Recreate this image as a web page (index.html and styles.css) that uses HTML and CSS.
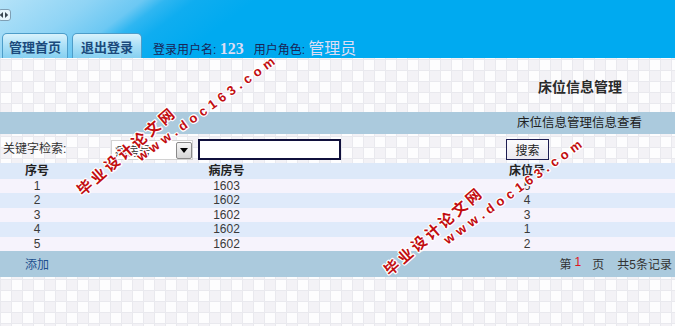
FILE: index.html
```html
<!DOCTYPE html>
<html lang="zh-CN">
<head>
<meta charset="utf-8">
<title>床位信息管理</title>
<link rel="stylesheet" href="styles.css">
</head>
<body>
<div class="header">
  <div class="hdr-top">
    <svg class="toggle" width="13" height="12" viewBox="0 0 13 12">
      <rect x="0.5" y="0.5" width="12" height="11" rx="2.5" fill="#e6f4fb" stroke="#7f9fb4"/>
      <path d="M5 3 L1.8 6 L5 9 Z" fill="#3a4650"/>
      <path d="M7 3 L10.2 6 L7 9 Z" fill="#3a4650"/>
    </svg>
  </div>
  <div class="nav">
    <a class="tab tab-home">管理首页</a>
    <a class="tab tab-out">退出登录</a>
    <span class="info">登录用户名: <b class="uval">123</b></span>
    <span class="info role">用户角色: <span class="rval">管理员</span></span>
  </div>
</div>

<div class="main">
  <div class="title-row"><h1 class="title">床位信息管理</h1></div>
  <div class="bar sub">床位信息管理信息查看</div>
  <div class="search">
    <span class="label">关键字检索:</span>
    <div class="sel">
      <span class="sel-text">病房号</span>
      <span class="sel-btn">
        <svg width="8" height="5" viewBox="0 0 8 5"><path d="M0 0 H8 L4 5 Z" fill="#000"/></svg>
      </span>
    </div>
    <input class="kw" type="text" value="">
    <button class="btn" type="button">搜索</button>
  </div>

  <div class="grid">
    <div class="row head"><div>序号</div><div>病房号</div><div>床位号</div></div>
    <div class="row odd"><div>1</div><div>1603</div><div>5</div></div>
    <div class="row even"><div>2</div><div>1602</div><div>4</div></div>
    <div class="row odd"><div>3</div><div>1602</div><div>3</div></div>
    <div class="row even"><div>4</div><div>1602</div><div>1</div></div>
    <div class="row odd"><div>5</div><div>1602</div><div>2</div></div>
  </div>

  <div class="bar foot">
    <a class="add">添加</a>
    <div class="pager">
      <span class="p1">第</span><span class="pnum">1</span><span class="p2">页</span><span>共5条记录</span>
    </div>
  </div>
</div>

<div class="wm wm-cn wm-cn1">毕业设计论文网</div>
<div class="wm wm-en wm-en1">www.doc163.com</div>
<div class="wm wm-cn wm-cn2">毕业设计论文网</div>
<div class="wm wm-en wm-en2">www.doc163.com</div>
</body>
</html>
```

FILE: styles.css
```css
html, body {
  margin: 0;
  padding: 0;
}

body {
  position: relative;
  min-height: 326px;
  overflow: hidden;
  font-family: "Liberation Sans", "Noto Sans CJK SC", sans-serif;
  font-size: 12px;
  color: #333;
  background-color: #fdfdfe;
  background-image:
    linear-gradient(to right, #e9e9ee 1px, transparent 1px),
    linear-gradient(to bottom, #e9e9ee 1px, transparent 1px),
    conic-gradient(#f3f2f6 25%, transparent 0 50%, #f3f2f6 0 75%, transparent 0);
  background-size: 11px 11px, 11px 11px, 22px 22px;
  background-position: 0 4px, 0 4px, 0 4px;
}

/* ---------- header ---------- */
.header {
  height: 58px;
  background:
    linear-gradient(143deg, #b4e2f8 0%, #8fd4f5 12%, #6cc8f3 19%, #2fb6f1 22%, #0fadf0 26%, #00aaf0 34%, #00aaf0 100%);
  display: flex;
  flex-direction: column;
}

.hdr-top {
  height: 33px;
  padding-top: 9px;
  box-sizing: border-box;
}

.toggle {
  display: block;
  margin-left: -2px;
}

.nav {
  height: 25px;
  display: flex;
  align-items: flex-start;
}

.tab {
  display: block;
  height: 25px;
  box-sizing: border-box;
  padding-top: 3px;
  line-height: 21px;
  text-align: center;
  font-size: 13px;
  font-weight: bold;
  color: #1b4a7c;
  border: 1px solid #4d9dc9;
  border-bottom: none;
  border-radius: 5px 5px 0 0;
  background: linear-gradient(#d9f2fc, #aee1f7 45%, #86d0f1);
}

.tab-home {
  width: 66px;
  margin-left: 2px;
}

.tab-out {
  width: 70px;
  margin-left: 4px;
}

.info {
  padding-top: 5px;
  line-height: 21px;
  color: #1a2456;
  font-size: 12px;
  margin-left: 11px;
  white-space: nowrap;
}

.info.role {
  margin-left: 10px;
}

.uval {
  font-family: "Liberation Serif", serif;
  font-size: 16px;
  font-weight: bold;
  color: #dcdcf4;
}

.rval {
  font-size: 16px;
  color: #dcdcf4;
}

/* ---------- main ---------- */
.title-row {
  height: 54px;
  box-sizing: border-box;
  padding-top: 21px;
  display: flex;
  justify-content: flex-end;
  padding-right: 53px;
}

.title {
  margin: 0;
  font-size: 14px;
  line-height: 16px;
  font-weight: bold;
  color: #2a2a2a;
}

.bar {
  background: #abcadd;
}

.sub {
  height: 22px;
  line-height: 22px;
  text-align: right;
  padding-right: 33px;
  font-size: 12.5px;
  color: #222;
}

.search {
  height: 29px;
  box-sizing: border-box;
  padding-top: 5px;
  display: flex;
  align-items: flex-start;
}

.label {
  width: 108px;
  padding-left: 3px;
  line-height: 21px;
  color: #333;
}

.sel {
  width: 82px;
  height: 20px;
  margin-top: 1px;
  box-sizing: border-box;
  border: 1px solid #d2d2d2;
  background: #fff;
  display: flex;
  align-items: center;
  justify-content: space-between;
}

.sel-text {
  padding-left: 3px;
  color: #333;
}

.sel-btn {
  width: 16px;
  height: 17px;
  box-sizing: border-box;
  border: 1px solid #8a8a8a;
  border-radius: 2px;
  background: linear-gradient(#f6f6f6, #d6d6d6);
  display: flex;
  align-items: center;
  justify-content: center;
}

.kw {
  width: 143px;
  height: 21px;
  box-sizing: border-box;
  margin: 0 0 0 5px;
  padding: 0 2px;
  border: 2px solid #10103c;
  background: #fff;
  font-family: inherit;
  font-size: 12px;
}

.btn {
  width: 43px;
  height: 21px;
  box-sizing: border-box;
  margin: 0 0 0 165px;
  padding: 0;
  border: 1px solid #1e1e52;
  background: linear-gradient(#fbfbfd, #ebe9f0);
  font-family: "Liberation Sans", "Noto Sans CJK SC", sans-serif;
  font-size: 12px;
  color: #222;
}

/* ---------- table ---------- */
.grid {
  display: flex;
  flex-direction: column;
}

.row {
  display: grid;
  grid-template-columns: 74px 305px 1fr;
  height: 14.4px;
  line-height: 14.4px;
  text-align: center;
  color: #3a3a3a;
}

.row.head {
  height: 16px;
  line-height: 16px;
  background: #dde9f9;
  font-weight: bold;
  color: #222;
}

.row.odd {
  background: #f6f3fc;
}

.row.even {
  background: #dfeafa;
}

.foot {
  height: 26px;
  display: flex;
  align-items: center;
  justify-content: space-between;
}

.add {
  margin-left: 25px;
  color: #1e4f8e;
  cursor: pointer;
}

.pager {
  display: flex;
  padding-right: 3px;
  color: #333;
  white-space: nowrap;
}

.p1 { margin-right: 3px; }
.pnum { color: #e0141e; margin-right: 11px; }
.p2 { margin-right: 13px; }

/* ---------- watermark overlays ---------- */
.wm {
  position: absolute;
  white-space: nowrap;
  line-height: 17px;
  font-weight: bold;
  color: #c20d10;
  transform-origin: 0 100%;
  text-shadow: 1px 0 0 #fff, -1px 0 0 #fff, 0 1px 0 #fff, 0 -1px 0 #fff,
               1px 1px 0 #fff, -1px -1px 0 #fff, 1px -1px 0 #fff, -1px 1px 0 #fff;
}

.wm-cn {
  font-family: "Noto Sans CJK SC", sans-serif;
  font-size: 15px;
  letter-spacing: 3px;
  transform: rotate(-41deg);
}

.wm-en {
  font-family: "Liberation Sans", sans-serif;
  font-size: 13px;
  letter-spacing: 4.5px;
  transform: rotate(-36deg);
}

.wm-cn1 { left: 84px; top: 181px; }
.wm-en1 { left: 143px; top: 148px; }
.wm-cn2 { left: 391px; top: 261px; }
.wm-en2 { left: 450px; top: 231px; }
```
